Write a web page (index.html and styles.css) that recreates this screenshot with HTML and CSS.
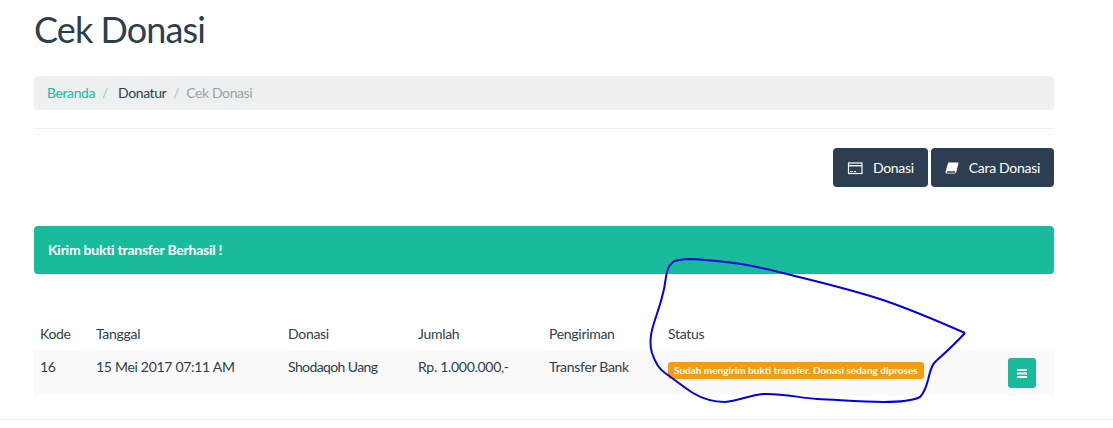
FILE: index.html
```html
<!DOCTYPE html>
<html lang="id">
<head>
    <meta charset="UTF-8">
    <title>Cek Donasi</title>
    <link rel="stylesheet" href="styles.css">
</head>
<body>
    <div class="container">
        <h1>Cek Donasi</h1>

        <ul class="breadcrumb">
            <li><a href="#">Beranda</a></li>
            <li class="dark">Donatur</li>
            <li class="active">Cek Donasi</li>
        </ul>

        <hr class="divider">

        <div class="actions">
            <a class="btn" href="#">
                <svg class="btn-icon" viewBox="0 0 16 14" width="16" height="14">
                    <rect x="1.5" y="2" width="13.5" height="10.5" fill="none" stroke="#fff" stroke-width="1.2"/>
                    <rect x="2" y="4" width="13" height="1.4" fill="#fff"/>
                    <rect x="3" y="10" width="3" height="1" fill="#fff"/>
                    <rect x="7" y="10" width="2" height="1" fill="#fff"/>
                </svg>
                Donasi
            </a>
            <a class="btn" href="#">
                <svg class="btn-icon" viewBox="0 0 14 14" width="14" height="14">
                    <path d="M3.6 1.5h9.2c.6 0 .9.5.7 1.1l-2.2 8.2c-.3 1-.9 1.7-2 1.7H2c-1 0-1.7-.9-1.4-2.1L3 2.1c.1-.4.3-.6.6-.6z" fill="#fff"/>
                    <path d="M1.8 10.2h8.6l-.6 1.5H2z" fill="#2c3e50"/>
                </svg>
                Cara Donasi
            </a>
        </div>

        <div class="alert"><strong>Kirim bukti transfer Berhasil !</strong></div>

        <table class="donasi">
            <thead>
                <tr>
                    <th class="col-kode">Kode</th>
                    <th class="col-tanggal">Tanggal</th>
                    <th class="col-donasi">Donasi</th>
                    <th class="col-jumlah">Jumlah</th>
                    <th class="col-kirim">Pengiriman</th>
                    <th class="col-status">Status</th>
                    <th></th>
                </tr>
            </thead>
            <tbody>
                <tr>
                    <td>16</td>
                    <td>15 Mei 2017 07:11 AM</td>
                    <td class="cell-tight">Shodaqoh Uang</td>
                    <td>Rp. 1.000.000,-</td>
                    <td>Transfer Bank</td>
                    <td><span class="label">Sudah mengirim bukti transfer. Donasi sedang diproses</span></td>
                    <td class="cell-menu">
                        <a class="btn-menu" href="#">
                            <svg viewBox="0 0 10 9" width="10" height="9">
                                <path d="M0 0h10v2H0zM0 3.5h10v2H0zM0 7h10v2H0z" fill="#fff"/>
                            </svg>
                        </a>
                    </td>
                </tr>
            </tbody>
        </table>
    </div>

    <hr class="page-end">

    <!-- hand drawn marker around the status -->
    <svg class="scribble" viewBox="0 0 1113 428" width="1113" height="428">
        <path d="M965 333C940 322 915 311 883 300C850 289 815 281 783 273C760 267 740 263 717 261C705 260 695 259 687 259C680 260 676 260 673 262C669 265 668 268 667 272C665 280 665 287 663 293C660 307 655 318 652 330C650 338 650 346 652 353C655 362 659 369 665 373C674 379 683 387 693 393C703 399 714 402 725 402C738 401 750 395 763 394C782 393 800 398 817 399C840 400 862 402 883 402C898 402 912 401 920 397C925 392 926 387 928 380C930 372 931 366 935 362C945 353 955 344 965 333" fill="none" stroke="#0000e6" stroke-width="2"/>
    </svg>
</body>
</html>
```

FILE: styles.css
```css
html, body {
    margin: 0;
    padding: 0;
}
body {
    font-family: Lato, "Liberation Sans", sans-serif;
    font-size: 14px;
    letter-spacing: -0.3px;
    color: #2c3e50;
    background-color: #fff;
    position: relative;
    height: 428px;
    overflow: hidden;
}
.container {
    width: 1020px;
    margin-left: 34px;
}
h1 {
    margin: 0;
    padding-top: 7px;
    font-size: 36px;
    font-weight: 400;
    line-height: 44px;
    letter-spacing: -0.9px;
}
.breadcrumb {
    list-style: none;
    display: flex;
    align-items: center;
    box-sizing: border-box;
    height: 34px;
    margin: 25px 0 18px;
    padding: 0 13px 2px;
    background-color: #ecf0f1;
    border-radius: 4px;
    letter-spacing: -0.4px;
}
.breadcrumb li + li::before {
    content: "/";
    color: #b4bcc2;
    padding: 0 7px;
}
.breadcrumb .dark::before {
    padding-right: 10px;
}
.breadcrumb li a {
    color: #18bc9c;
    text-decoration: none;
}
.breadcrumb .active {
    color: #95a5a6;
}
.divider {
    margin: 0;
    border: 0;
    border-top: 1px solid #ecf0f1;
}
.actions {
    display: flex;
    justify-content: flex-end;
    gap: 3px;
    margin-top: 19px;
}
.btn {
    display: flex;
    align-items: center;
    height: 39px;
    padding: 0 14px;
    background-color: #2c3e50;
    color: #fff;
    border-radius: 4px;
    text-decoration: none;
}
.btn-icon {
    margin-right: 10px;
}
.alert {
    display: flex;
    align-items: center;
    box-sizing: border-box;
    height: 48px;
    margin-top: 39px;
    padding: 0 14px 2px;
    background-color: #18bc9c;
    color: #fff;
    border-radius: 4px;
    letter-spacing: -0.25px;
}
.donasi {
    width: 100%;
    margin-top: 43px;
    border-collapse: collapse;
    table-layout: fixed;
}
.donasi th {
    height: 34px;
    padding: 0 6px 2px;
    box-sizing: border-box;
    font-weight: 400;
    text-align: left;
}
.donasi td {
    height: 44px;
    padding: 0 6px 13px;
    background-color: #f9f9f9;
    box-sizing: border-box;
}
.col-kode { width: 56px; }
.col-tanggal { width: 192px; }
.col-donasi { width: 130px; }
.col-jumlah { width: 131px; }
.col-kirim { width: 119px; }
.col-status { width: 340px; }
.donasi .cell-tight {
    letter-spacing: -0.6px;
}
.label {
    display: inline-block;
    vertical-align: -5px;
    padding: 0 6px;
    background-color: #f39c12;
    color: #fff;
    font-size: 10px;
    font-weight: 700;
    line-height: 17px;
    letter-spacing: 0;
    border-radius: 3px;
    white-space: nowrap;
}
.donasi .cell-menu {
    padding: 0 0 0 6px;
}
.btn-menu {
    display: flex;
    align-items: center;
    justify-content: center;
    width: 28px;
    height: 30px;
    background-color: #18bc9c;
    border-radius: 3px;
}
.page-end {
    margin: 24px 0 0;
    border: 0;
    border-top: 1px solid #ecf0f1;
}
.scribble {
    position: absolute;
    top: 0;
    left: 0;
    pointer-events: none;
}
```
